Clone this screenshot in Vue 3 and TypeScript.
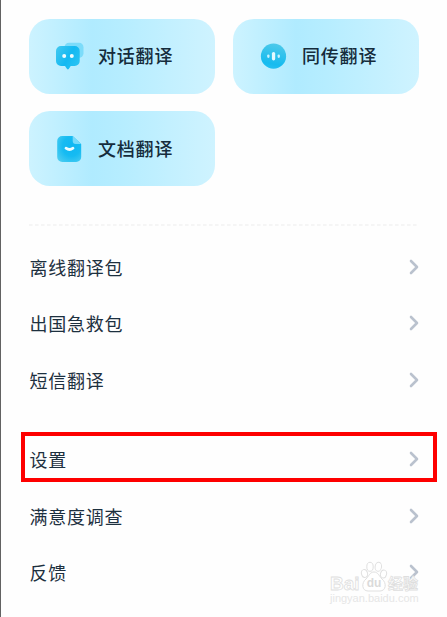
<script setup lang="ts">
interface Tool {
  label: string
  icon: 'chat' | 'voice' | 'document'
}

interface Entry {
  label: string
  highlighted?: boolean
}

const tools: Tool[] = [
  { label: '对话翻译', icon: 'chat' },
  { label: '同传翻译', icon: 'voice' },
  { label: '文档翻译', icon: 'document' },
]

const groups: Entry[][] = [
  [{ label: '离线翻译包' }, { label: '出国急救包' }, { label: '短信翻译' }],
  [{ label: '设置', highlighted: true }, { label: '满意度调查' }, { label: '反馈' }],
]
</script>

<template>
  <main class="page">
    <section class="tools">
      <button v-for="tool in tools" :key="tool.icon" class="tool" type="button">
        <svg v-if="tool.icon === 'chat'" class="tool-icon" viewBox="0 0 30 30">
          <defs>
            <linearGradient id="chat-fill" x1="0" y1="0" x2="1" y2="0.6">
              <stop offset="0" stop-color="#43c9f0" />
              <stop offset="0.6" stop-color="#13b9f2" />
              <stop offset="1" stop-color="#27c2f3" />
            </linearGradient>
          </defs>
          <rect x="9.5" y="1.7" width="19" height="15" rx="4.5" fill="#7cdcfa" />
          <path d="M6 5h13.700a5 5 0 0 1 5 5v10a5 5 0 0 1-5 5h-4l-1.800 2.700q-1 1.500-2 0L10 25H6a5 5 0 0 1-5-5V10a5 5 0 0 1 5-5z" fill="url(#chat-fill)" />
          <circle cx="9.200" cy="15.100" r="2" fill="#effcff" />
          <circle cx="16.800" cy="15.100" r="2" fill="#effcff" />
        </svg>
        <svg v-else-if="tool.icon === 'voice'" class="tool-icon" viewBox="0 0 30 30">
          <defs>
            <linearGradient id="voice-fill" x1="0.6" y1="0" x2="0.4" y2="1">
              <stop offset="0" stop-color="#4dc9ea" />
              <stop offset="0.8" stop-color="#16bbef" />
              <stop offset="1" stop-color="#25c0f2" />
            </linearGradient>
          </defs>
          <circle cx="14.500" cy="15.200" r="12.600" fill="url(#voice-fill)" />
          <rect x="12.900" y="11" width="3.300" height="8.400" rx="1.600" fill="#e4faff" />
          <rect x="8.200" y="13.500" width="2.300" height="3.400" rx="1.100" fill="#caf3ff" />
          <rect x="18.600" y="13.500" width="2.300" height="3.400" rx="1.100" fill="#caf3ff" />
        </svg>
        <svg v-else class="tool-icon" viewBox="0 0 30 30">
          <defs>
            <radialGradient id="document-fill" cx="0.6" cy="0.4" r="0.75">
              <stop offset="0" stop-color="#0fb7f3" />
              <stop offset="0.5" stop-color="#16bbf2" />
              <stop offset="1" stop-color="#4ccdf1" />
            </radialGradient>
          </defs>
          <path d="M7.200 2h10.500l8.500 8v13a5 5 0 0 1-5 5h-14a5 5 0 0 1-5-5V7a5 5 0 0 1 5-5z" fill="url(#document-fill)" />
          <path d="M17.700 2l8.500 8h-5.500a3 3 0 0 1-3-3z" fill="#76dafa" />
          <path d="M11 14.200q3.500 2.500 7 0" fill="none" stroke="#e9fbff" stroke-width="2.800" stroke-linecap="round" />
        </svg>
        <span class="tool-label">{{ tool.label }}</span>
      </button>
    </section>

    <svg class="divider" viewBox="0 0 390 2">
      <path d="M0 1H390" stroke="#ececec" stroke-width="1.200" stroke-dasharray="3.500 2.500" />
    </svg>

    <nav class="menu">
      <ul v-for="(group, index) in groups" :key="index" class="group">
        <li v-for="entry in group" :key="entry.label" class="entry" :class="{ highlighted: entry.highlighted }">
          <span>{{ entry.label }}</span>
          <svg class="chevron" viewBox="0 0 10 16">
            <path d="M2 2l6 6-6 6" fill="none" stroke="#bac2ce" stroke-width="2.600" stroke-linecap="round" stroke-linejoin="round" />
          </svg>
        </li>
      </ul>
    </nav>

    <div class="watermark">
      <div class="brand">
        <span class="brand-latin">Bai</span>
        <svg class="paw" viewBox="0 0 28 32">
          <g fill="#fff" stroke="#e0e0e0" stroke-width="1">
            <ellipse cx="4.500" cy="13.500" rx="3" ry="4" transform="rotate(-15 4.500 13.500)" />
            <ellipse cx="10" cy="6.800" rx="3.200" ry="4.500" />
            <ellipse cx="18.300" cy="6.800" rx="3.200" ry="4.500" transform="rotate(8 18.300 6.800)" />
            <ellipse cx="23.500" cy="14" rx="3" ry="4" transform="rotate(15 23.500 14)" />
            <path d="M14 12c4 0 5 4 8 7 5 4 4 12-2 12H8c-6 0-7-8-2-12 3-3 4-7 8-7z" />
          </g>
          <text class="paw-text" x="14" y="27" text-anchor="middle">du</text>
        </svg>
        <span class="brand-cjk">经验</span>
      </div>
      <div class="site">jingyan.baidu.com</div>
    </div>
  </main>
</template>

<style>
body {
  background: #fefefe;
}
</style>

<style scoped>
.page {
  position: relative;
  box-sizing: border-box;
  width: 447px;
  height: 617px;
  padding: 18.700px 28px 0 28.400px;
  overflow: hidden;
  border-left: 1px solid #626262;
  background: #fefefe;
  color: #1d303f;
  font-family: "Noto Sans CJK SC", sans-serif;
}

.tools {
  display: grid;
  grid-template-columns: 186px 186px;
  gap: 17.500px 18px;
}

.tool {
  display: flex;
  align-items: center;
  box-sizing: border-box;
  height: 75px;
  padding: 0 0 0 25.600px;
  border: 0;
  border-radius: 21px;
  background: linear-gradient(90deg, #cdf3ff 0%, #b0ebff 34%, #b6edff 50%, #cff3ff 100%);
  color: #152c3c;
  font-family: inherit;
}

.tool-icon {
  flex: none;
  width: 30px;
  height: 30px;
}

.tool-label {
  margin: 0 0 1.500px 13px;
  font-size: 18px;
  font-weight: 500;
  letter-spacing: 0.8px;
  line-height: 26px;
}

.divider {
  display: block;
  width: 390px;
  height: 2px;
  margin-top: 37.400px;
}

.menu {
  display: flex;
  flex-direction: column;
  gap: 23.300px;
  margin-top: 13.400px;
}

.group {
  margin: 0;
  padding: 0;
  list-style: none;
}

.entry {
  position: relative;
  display: flex;
  align-items: center;
  justify-content: space-between;
  height: 56.300px;
  font-size: 18px;
  letter-spacing: 0.8px;
  line-height: 26px;
}

.chevron {
  width: 10px;
  height: 16px;
}

.highlighted::after {
  position: absolute;
  inset: 0.800px -18px 5px -8px;
  border: 4px solid #fe0000;
  content: "";
}

.watermark {
  position: absolute;
  top: 562px;
  left: 329px;
  width: 92px;
  color: #fff;
  -webkit-text-stroke: 0.8px #dedede;
}

.brand {
  display: flex;
  align-items: flex-end;
  height: 30px;
}

.brand-latin {
  width: 30px;
  font: bold 19px/17px "Liberation Sans", sans-serif;
  -webkit-text-stroke: 0.8px #dedede;
}

.paw {
  flex: none;
  width: 28px;
  height: 32px;
}

.paw-text {
  fill: #dadada;
  font: bold 12px "Liberation Sans", sans-serif;
  -webkit-text-stroke: 0;
}

.brand-cjk {
  font-size: 15px;
  font-weight: 700;
  line-height: 19px;
}

.site {
  color: #e6e6e6;
  font: 11px/13px "Liberation Sans", sans-serif;
  -webkit-text-stroke: 0;
}
</style>
